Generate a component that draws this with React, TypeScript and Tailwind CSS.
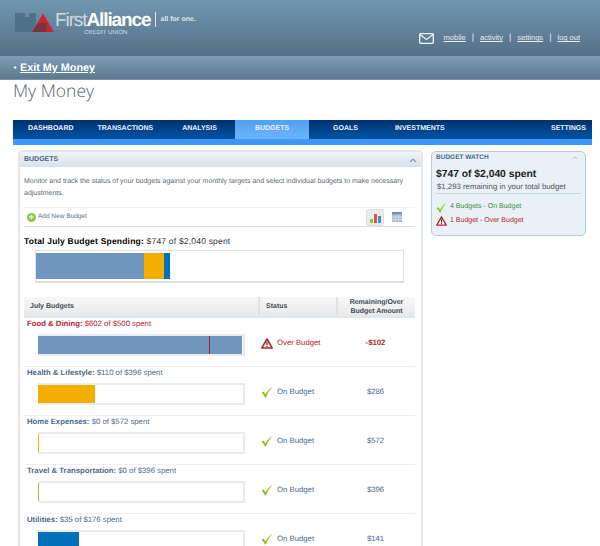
import React from "react";

const sans = "font-['Liberation_Sans',Arial,sans-serif]";

function Check({ className = "" }: { className?: string }) {
  return (
    <svg viewBox="0 0 12 12" className={className}>
      <path d="M0.6 6.6 L2.4 5.6 L4.6 8.2 C6.2 5.4 8.4 2.8 11.6 0.8 C9 3.6 6.6 7 5 11.4 L4 11.4 C3 9.6 1.8 8 0.6 6.6 Z" fill="#8fc31f" />
    </svg>
  );
}

function Warn({ className = "" }: { className?: string }) {
  return (
    <svg viewBox="0 0 12 11" className={className}>
      <path d="M6 1 L11.2 10 L0.8 10 Z" fill="#fff" stroke="#b5232b" strokeWidth="1.5" strokeLinejoin="round" />
      <rect x="5.4" y="3.8" width="1.2" height="3.4" fill="#333" />
      <rect x="5.4" y="7.8" width="1.2" height="1.2" fill="#333" />
    </svg>
  );
}

const rows = [
  { name: "Food & Dining:", spent: "$602 of $500 spent", over: true, width: "100%", color: "bg-[#7096c0]", amount: "-$102" },
  { name: "Health & Lifestyle:", spent: "$110 of $396 spent", over: false, width: "28%", color: "bg-[#f4ae00]", amount: "$286" },
  { name: "Home Expenses:", spent: "$0 of $572 spent", over: false, width: "1px", color: "bg-[#f4ae00]", amount: "$572" },
  { name: "Travel & Transportation:", spent: "$0 of $396 spent", over: false, width: "1px", color: "bg-[#9ccb3b]", amount: "$396" },
  { name: "Utilities:", spent: "$35 of $176 spent", over: false, width: "20%", color: "bg-[#0071b9]", amount: "$141" },
];

function Row({ r }: { r: (typeof rows)[number] }) {
  return (
    <div className="flex h-[49px] border-b border-[#eef1f4]">
      <div className="w-[234px] shrink-0 pl-[3px]">
        <div className={`text-[7.75px] leading-[12px] ${r.over ? "text-[#b5232b]" : "text-[#4c6a88]"}`}>
          <span className="font-bold">{r.name}</span> {r.spent}
        </div>
        <div className="relative ml-[11px] mt-[4px] h-[22px] w-[207px] border-2 border-l-[1px] border-[#ebebeb] bg-white">
          <div className={`-ml-[1px] h-full ${r.color}`} style={{ width: r.width }} />
          {r.over && <div className="absolute left-[170px] top-0 h-full w-px bg-[#a8232f]" />}
        </div>
      </div>
      <div className={`flex w-[78px] shrink-0 items-center pt-[2px] pl-[3px] text-[7.75px] ${r.over ? "text-[#b5232b]" : "text-[#4c6a88]"}`}>
        {r.over ? <Warn className="h-[11px] w-[12px]" /> : <Check className="h-[12px] w-[12px]" />}
        <span className="ml-[4px]">{r.over ? "Over Budget" : "On Budget"}</span>
      </div>
      <div className={`flex flex-1 items-center justify-center pt-[2px] text-[7.75px] ${r.over ? "font-bold text-[#b5232b]" : "text-[#4c6a88]"}`}>
        {r.amount}
      </div>
    </div>
  );
}

export default function App() {
  return (
    <div className={`relative h-[546px] w-[600px] overflow-hidden bg-white [text-rendering:geometricPrecision] ${sans}`}>
      <header className="flex h-[56px] justify-between bg-gradient-to-b from-[#7197b1] to-[#537186] pl-[15px] pr-[20px]">
        <div className="flex items-start pt-[11px]">
          <svg viewBox="0 0 40 20" className="mt-[2px] h-[20px] w-[40px]">
            <path d="M0 0 H10 V4 H14 V0 H21 V12 L17 19 H0 Z" fill="#4f7289" />
            <path d="M28 0.5 L39 19 H17 Z" fill="#cf2231" />
            <path d="M23 10 H32 L31 19 H17 Z" fill="#7a3338" />
          </svg>
          <div className="flex flex-col">
            <div className="text-[19px] leading-[19px] tracking-[-1.1px] text-[#e8eef2]">
              <span className="font-light opacity-80">First</span>
              <span className="font-bold text-white">Alliance</span>
            </div>
            <div className="pl-[29px] text-[6px] leading-[6px] text-[#d5dfe6]">CREDIT UNION</div>
          </div>
          <div className="ml-[4px] mt-[1px] h-[15px] w-px bg-[#dfe7ec]" />
          <div className="ml-[5px] mt-[5px] text-[7px] font-bold leading-[7px] text-[#dfe7ec]">all for one.</div>
        </div>
        <div className="flex items-center gap-[6px] pt-[20px] text-[7.5px] text-[#e6edf2]">
          <svg viewBox="0 0 15 11" className="mr-[4px] h-[11px] w-[15px]">
            <rect x="0.7" y="0.7" width="13.6" height="9.6" rx="1" fill="none" stroke="#f2f6f8" strokeWidth="1.3" />
            <path d="M1 1.5 L7.5 6.5 L14 1.5" fill="none" stroke="#f2f6f8" strokeWidth="1.2" />
          </svg>
          <a className="underline">mobile</a>
          <span className="mb-px text-[9px] leading-none">|</span>
          <a className="underline">activity</a>
          <span className="mb-px text-[9px] leading-none">|</span>
          <a className="underline">settings</a>
          <span className="mb-px text-[9px] leading-none">|</span>
          <a className="underline">log out</a>
        </div>
      </header>

      <div className="flex h-[24px] items-center border-b border-[#7f8f9d] bg-gradient-to-b from-[#7f9db2] to-[#5a7a90] pl-[13px] pt-[2px] text-white">
        <span className="mr-[4px] text-[6px]">◂</span>
        <a className="text-[10.8px] font-bold underline">Exit My Money</a>
      </div>

      <h1 className="pl-[13px] pt-[1px] font-['Open_Sans',sans-serif] text-[17.5px] font-light leading-[20px] text-[#55606a]">My Money</h1>

      <nav className="mx-[13px] mt-[19px] h-[25px] w-[579px] bg-[#3e97f5]">
        <div className="flex h-[19px] bg-gradient-to-b from-[#00316c] to-[#0055a5] text-[7px] font-bold text-[#eef4fa]">
          <div className="flex w-[222px] items-center pl-[15px]">
            <span>DASHBOARD</span>
            <span className="ml-[24px]">TRANSACTIONS</span>
            <span className="ml-[29px]">ANALYSIS</span>
          </div>
          <div className="flex w-[74px] items-center justify-center bg-gradient-to-b from-[#4ea0f2] to-[#6eb5fb] text-[#e8f2fd]">BUDGETS</div>
          <div className="flex flex-1 items-center pl-[24px]">
            <span>GOALS</span>
            <span className="ml-[37px]">INVESTMENTS</span>
            <span className="ml-auto pr-[6px]">SETTINGS</span>
          </div>
        </div>
      </nav>

      <div className="mt-[5px] flex items-start pl-[18px]">
        <section className="h-[420px] w-[405px] rounded-t-[5px] border-2 border-b-0 border-[#e4e6e8]">
          <div className="flex h-[15px] items-center justify-between rounded-t-[3px] bg-gradient-to-b from-[#f2f5f7] to-[#d6e1e8] pl-[4px] pr-[4px] pt-[1px] text-[7px] font-bold text-[#456985]">
            <span>BUDGETS</span>
            <svg viewBox="0 0 8 5" className="h-[5px] w-[8px]"><path d="M1 4 L4 1 L7 4" fill="none" stroke="#7f9bb0" strokeWidth="1.2" /></svg>
          </div>
          <div className="px-[4px]">
            <p className="pt-[9px] text-[7px] leading-[12px] text-[#5f6971]">
              Monitor and track the status of your budgets against your monthly targets and select individual budgets to make necessary adjustments.
            </p>
            <div className="mt-[7px] flex h-[20px] w-[391px] items-center border-t border-b border-t-[#f2f2f2] border-b-[#dcdcdc]">
              <span className="ml-[3px] flex h-[9px] w-[9px] items-center justify-center rounded-full bg-[#8cc63f] text-[9px] font-bold leading-none text-white">+</span>
              <span className="ml-[2px] text-[6.5px] text-[#5b7388]">Add New Budget</span>
              <div className="ml-auto mr-[13px] flex items-center gap-[9px]">
                <div className="flex h-[15px] w-[16px] items-end justify-center gap-px rounded-[2px] bg-[#e9ebec] pb-[2px] shadow-[0_0_0_1px_#dddfe0]">
                  <span className="h-[4px] w-[3px] bg-[#8cc63f]" />
                  <span className="h-[9px] w-[3px] bg-[#d9534f]" />
                  <span className="h-[7px] w-[3px] bg-[#3f8fd2]" />
                </div>
                <svg viewBox="0 0 10 10" className="h-[10px] w-[10px]">
                  <rect width="10" height="10" fill="#a9bdd0" />
                  <rect width="10" height="2.4" fill="#6f93b8" />
                  <path d="M0 5 H10 M0 7.5 H10 M3.3 2.4 V10 M6.6 2.4 V10" stroke="#e6ecf2" strokeWidth="0.6" />
                </svg>
              </div>
            </div>
            <div className="pt-[8px] text-[8.5px] leading-[13px] tracking-[0.2px] text-[#333]">
              <span className="font-bold text-black">Total July Budget Spending:</span> $747 of $2,040 spent
            </div>
            <div className="ml-[11px] mt-[2px] flex h-[33px] w-[369px] items-stretch border border-b-2 border-[#e0e0e0] pb-[2px] pt-[2px]">
              <div className="w-[108px] bg-[#7096c0]" />
              <div className="w-[20px] bg-[#f4ae00]" />
              <div className="w-[6px] bg-[#0071b9]" />
            </div>
            <div className="mt-[14px] w-[391px]">
              <div className="flex h-[21px] border-b-2 border-[#e3e7ea] bg-gradient-to-b from-[#f8f8f8] to-[#e8e9ea] text-[7px] font-bold text-[#454c52]">
                <div className="flex w-[234px] items-center pl-[6px] pt-[2px]">July Budgets</div>
                <div className="flex w-[78px] items-center border-l-2 border-[#dfe3e6] pl-[6px] pt-[2px]">Status</div>
                <div className="flex flex-1 items-center justify-center border-l-2 border-[#dfe3e6] text-center leading-[9px]">Remaining/Over<br />Budget Amount</div>
              </div>
              {rows.map((r) => <Row key={r.name} r={r} />)}
            </div>
          </div>
        </section>

        <aside className="ml-[8px] mt-[1px] h-[85px] w-[155px] rounded-[5px] border border-[#b4cbdd] bg-[#e9f0f6] px-[4px]">
          <div className="flex h-[11px] items-center justify-between pr-[3px] pt-[1px] text-[6.5px] font-bold text-[#456985]">
            <span>BUDGET WATCH</span>
            <svg viewBox="0 0 8 5" className="h-[4px] w-[6px]"><path d="M1 4 L4 1 L7 4" fill="none" stroke="#9ab0c2" strokeWidth="1" /></svg>
          </div>
          <div className="mt-[5px] text-[10.3px] font-bold leading-[13px] text-[#1d1d1d]">$747 of $2,040 spent</div>
          <div className="border-b border-[#ccd8e1] pb-[1px] pl-[1px] pt-[1px] text-[7.8px] leading-[10px] text-[#555]">$1,293 remaining in your total budget</div>
          <div className="mt-[6px] flex h-[14px] items-center text-[7px] text-[#3b8f3b]">
            <Check className="h-[11px] w-[11px]" />
            <span className="ml-[3px]">4 Budgets - On Budget</span>
          </div>
          <div className="flex h-[14px] items-center text-[7px] text-[#b5232b]">
            <Warn className="h-[10px] w-[11px]" />
            <span className="ml-[3px]">1 Budget - Over Budget</span>
          </div>
        </aside>
      </div>
    </div>
  );
}
